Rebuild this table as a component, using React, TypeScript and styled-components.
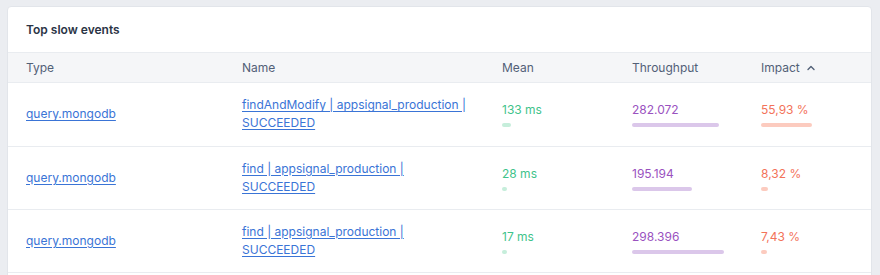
import React from "react";
import styled, { createGlobalStyle } from "styled-components";

const GlobalStyle = createGlobalStyle`
  html, body {
    margin: 0;
    background: #ebedf1;
    font-family: Inter, "Noto Sans", sans-serif;
  }
  body {
    padding: 6px 8px 0 7px;
  }
`;

const Card = styled.section`
  background: #fff;
  border: 1px solid #e2e5ea;
  border-radius: 4px;
  overflow: hidden;
  padding-bottom: 24px;
`;

const CardHeader = styled.header`
  height: 45px;
  display: flex;
  align-items: center;
  padding: 0 18px;

  h2 {
    margin: 0;
    font-size: 12px;
    font-weight: 600;
    color: #2b3445;
  }
`;

const Row = styled.div<{ $head?: boolean }>`
  box-sizing: border-box;
  display: grid;
  grid-template-columns: 216px 260px 130px 129px 1fr;
  align-items: center;
  padding: 0 18px;
  border-top: 1px solid #e9ecf0;
  height: ${(p) => (p.$head ? "30px" : "63.5px")};
  background: ${(p) => (p.$head ? "#f5f6f8" : "#fff")};

  &:last-child {
    border-bottom: 1px solid #e9ecf0;
  }
`;

const HeadCell = styled.div`
  font-size: 12px;
  color: #526077;
  display: flex;
  align-items: center;
  gap: 7px;
`;

const Link = styled.a<{ $wrap?: boolean }>`
  font-size: 12px;
  line-height: 18px;
  color: #3a74d6;
  text-decoration: underline;
  text-underline-offset: 2px;
  display: block;
  max-width: ${(p) => (p.$wrap ? "226px" : "none")};
`;

const Metric = styled.div`
  display: flex;
  flex-direction: column;
  align-items: flex-start;
`;

const Value = styled.span<{ $color: string }>`
  font-size: 12px;
  line-height: 18px;
  color: ${(p) => p.$color};
`;

const Bar = styled.span<{ $color: string }>`
  display: block;
  height: 4px;
  margin-top: 4px;
  border-radius: 2px;
  background: ${(p) => p.$color};
`;

const Chevron = () => (
  <svg width="8" height="6" viewBox="0 0 8 6" fill="none">
    <path d="M1 4.5L4 1.5L7 4.5" stroke="#526077" strokeWidth="1.4" strokeLinecap="round" strokeLinejoin="round" />
  </svg>
);

const events = [
  { name: "findAndModify | appsignal_production | SUCCEEDED", mean: "133 ms", meanW: 9, tp: "282.072", tpW: 87, impact: "55,93 %", impactW: 51 },
  { name: "find | appsignal_production | SUCCEEDED", mean: "28 ms", meanW: 5, tp: "195.194", tpW: 60, impact: "8,32 %", impactW: 7 },
  { name: "find | appsignal_production | SUCCEEDED", mean: "17 ms", meanW: 5, tp: "298.396", tpW: 92, impact: "7,43 %", impactW: 6 },
];

export default function App() {
  return (
    <>
      <GlobalStyle />
      <Card>
        <CardHeader>
          <h2>Top slow events</h2>
        </CardHeader>
        <div>
          <Row $head>
            <HeadCell>Type</HeadCell>
            <HeadCell>Name</HeadCell>
            <HeadCell>Mean</HeadCell>
            <HeadCell>Throughput</HeadCell>
            <HeadCell>
              Impact <Chevron />
            </HeadCell>
          </Row>
          {events.map((e, i) => (
            <Row key={i}>
              <div>
                <Link href="#">query.mongodb</Link>
              </div>
              <div>
                <Link href="#" $wrap>
                  {e.name}
                </Link>
              </div>
              <Metric>
                <Value $color="#3fc38b">{e.mean}</Value>
                <Bar $color="#c6eedb" style={{ width: e.meanW }} />
              </Metric>
              <Metric>
                <Value $color="#9a52bf">{e.tp}</Value>
                <Bar $color="#dbc7ea" style={{ width: e.tpW }} />
              </Metric>
              <Metric>
                <Value $color="#f3735a">{e.impact}</Value>
                <Bar $color="#fccbbf" style={{ width: e.impactW }} />
              </Metric>
            </Row>
          ))}
        </div>
      </Card>
    </>
  );
}
